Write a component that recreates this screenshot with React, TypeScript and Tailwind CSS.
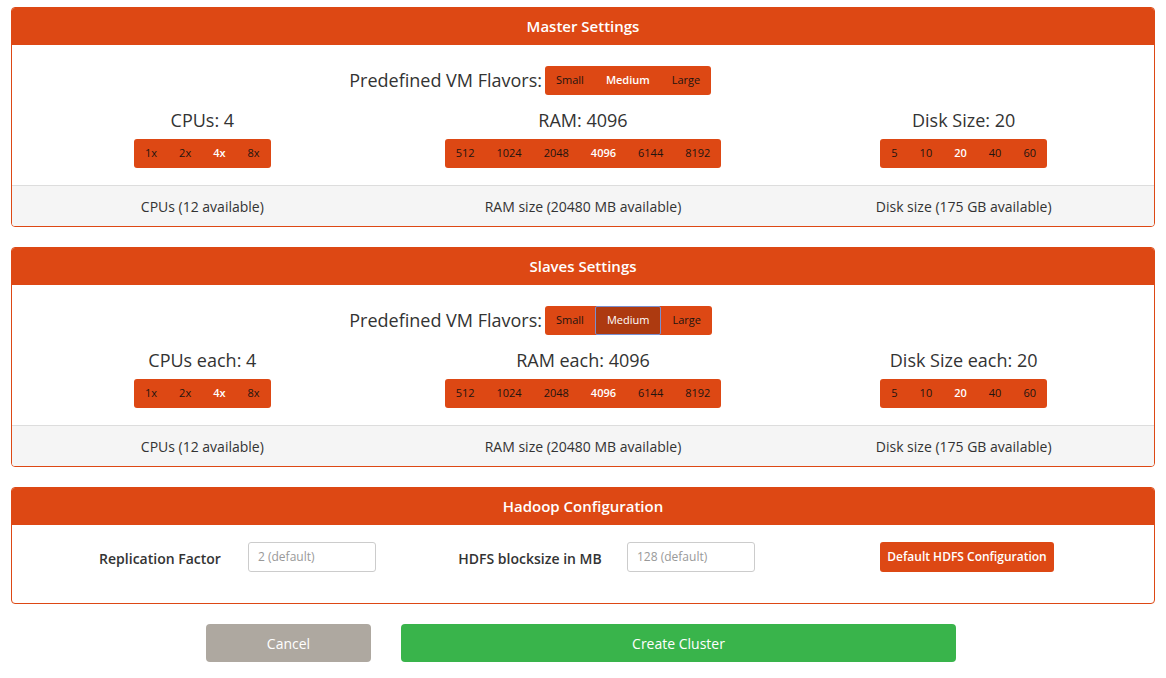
import { FC } from "react"

interface GroupProps {
  items: string[]
  active: string
  focused?: boolean
}

const ButtonGroup: FC<GroupProps> = ({ items, active, focused }) => {
  return (
    <div className="inline-flex h-[29px] rounded-[3px] bg-[#dd4814]">
      {items.map(item => {
        const on = item === active
        return (
          <button
            key={item}
            className={
              on && focused
                ? "h-full px-[11px] text-[11px] font-medium text-white bg-[#ad3a10] border border-[#7a8fcf] rounded-[2px]"
                : on
                ? "h-full px-[11px] text-[11px] font-semibold text-white"
                : "h-full px-[11px] text-[11px] font-medium text-[#221410]"
            }
          >
            {item}
          </button>
        )
      })}
    </div>
  )
}

interface Column {
  label: string
  items: string[]
  active: string
  footer: string
}

interface SettingsPanelProps {
  title: string
  flavorFocused?: boolean
  columns: Column[]
}

const SettingsPanel: FC<SettingsPanelProps> = ({ title, flavorFocused, columns }) => {
  return (
    <section className="mx-[11px] rounded-[4px] border border-[#dd4814] overflow-hidden">
      <div className="h-[37px] bg-[#dd4814] flex items-center justify-center text-white text-[15px] font-semibold">
        {title}
      </div>
      <div className="pt-[21px] pb-[17px]">
        <div className="flex items-center h-[29px]">
          <div className="w-[530px] text-right text-[18px] text-[#333]">Predefined VM Flavors:</div>
          <div className="ml-[3px]">
            <ButtonGroup items={["Small", "Medium", "Large"]} active="Medium" focused={flavorFocused} />
          </div>
        </div>
        <div className="grid grid-cols-3 mt-[15px]">
          {columns.map(col => (
            <div key={col.label} className="flex flex-col items-center">
              <div className="h-[20px] leading-[20px] text-[18px] text-[#333]">{col.label}</div>
              <div className="mt-[9px]">
                <ButtonGroup items={col.items} active={col.active} />
              </div>
            </div>
          ))}
        </div>
      </div>
      <div className="h-[41px] border-t border-[#ddd] bg-[#f5f5f5] grid grid-cols-3 items-center text-center text-[14px] text-[#333]">
        {columns.map(col => (
          <div key={col.footer}>{col.footer}</div>
        ))}
      </div>
    </section>
  )
}

const cpus = ["1x", "2x", "4x", "8x"]
const rams = ["512", "1024", "2048", "4096", "6144", "8192"]
const disks = ["5", "10", "20", "40", "60"]

export default function App() {
  return (
    <div className="w-[1166px] min-h-[678px] bg-white pt-[7px] font-['Open_Sans',sans-serif]">
      <SettingsPanel
        title="Master Settings"
        columns={[
          { label: "CPUs: 4", items: cpus, active: "4x", footer: "CPUs (12 available)" },
          { label: "RAM: 4096", items: rams, active: "4096", footer: "RAM size (20480 MB available)" },
          { label: "Disk Size: 20", items: disks, active: "20", footer: "Disk size (175 GB available)" },
        ]}
      />
      <div className="mt-[20px]">
        <SettingsPanel
          title="Slaves Settings"
          flavorFocused
          columns={[
            { label: "CPUs each: 4", items: cpus, active: "4x", footer: "CPUs (12 available) " },
            { label: "RAM each: 4096", items: rams, active: "4096", footer: "RAM size (20480 MB available) " },
            { label: "Disk Size each: 20", items: disks, active: "20", footer: "Disk size (175 GB available) " },
          ]}
        />
      </div>

      <section className="mx-[11px] mt-[20px] rounded-[4px] border border-[#dd4814] overflow-hidden">
        <div className="h-[37px] bg-[#dd4814] flex items-center justify-center text-white text-[15px] font-semibold">
          Hadoop Configuration
        </div>
        <div className="h-[78px] pt-[17px] flex items-start">
          <div className="ml-[73px] w-[150px] h-[30px] pt-[3px] flex items-center justify-center text-[14px] font-semibold text-[#333]">
            Replication Factor
          </div>
          <input
            className="ml-[13px] w-[128px] h-[30px] rounded-[3px] border border-[#ccc] px-[9px] pb-[2px] text-[12px] placeholder:text-[#999] outline-none"
            placeholder="2 (default)"
          />
          <div className="ml-[79px] w-[150px] h-[30px] pt-[3px] flex items-center justify-center text-[14px] font-semibold text-[#333]">
            HDFS blocksize in MB
          </div>
          <input
            className="ml-[22px] w-[128px] h-[30px] rounded-[3px] border border-[#ccc] px-[9px] pb-[2px] text-[12px] placeholder:text-[#999] outline-none"
            placeholder="128 (default)"
          />
          <button className="ml-[125px] w-[174px] h-[30px] rounded-[3px] bg-[#dd4814] text-white text-[12px] font-semibold">
            Default HDFS Configuration
          </button>
        </div>
      </section>

      <div className="mt-[20px] flex justify-center gap-[30px] pr-[4px]">
        <button className="w-[165px] h-[38px] rounded-[4px] bg-[#aea8a0] text-white text-[14px] font-medium">Cancel</button>
        <button className="w-[555px] h-[38px] rounded-[4px] bg-[#39b44b] text-white text-[14px] font-medium">Create Cluster</button>
      </div>
    </div>
  )
}
